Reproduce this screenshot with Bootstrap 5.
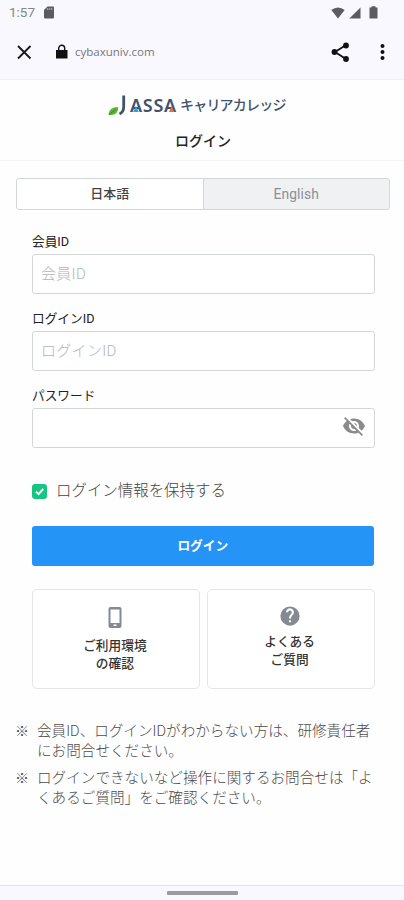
<!DOCTYPE html>
<html lang="ja">
<head>
<meta charset="utf-8">
<meta name="viewport" content="width=device-width, initial-scale=1">
<title>ログイン</title>
<link href="https://cdn.jsdelivr.net/npm/bootstrap@5.3.0/dist/css/bootstrap.min.css" rel="stylesheet">
<style>
body{font-family:Roboto,"Noto Sans CJK JP",sans-serif;color:#333;background:#fefefe;height:900px;overflow:hidden}
svg{display:block;flex:none}
.chrome{height:80px;background:#f8f8fe;border-bottom:1px solid #f1f1f4}
.status{height:25px;padding:0 25px 0 9px;font-size:13.5px;line-height:25px;color:#85858a}
.toolbar{height:54px;padding:0 12px 0 14px}
.lock{margin-left:21px}
.more{margin-left:20px}
.url{font-family:"Open Sans",sans-serif;font-size:11.5px;color:#77777c;margin-left:6px}
.site-head{height:81px;padding-top:13px;border-bottom:1px solid #f4f4f5}
.logo-text{height:24px;line-height:21px;padding-left:108px;color:#40536a;font-weight:500;white-space:nowrap}
.logo-latin{font-family:"Noto Sans",sans-serif;font-weight:600;font-size:18px;letter-spacing:.7px;width:50px;margin-left:4px}
.logo-accent{left:0;top:0}
.logo-kana{font-size:14px;letter-spacing:-.8px;margin-left:0}
.page-title{font-size:14px;line-height:20px;margin:14px 0 0 2px;font-weight:500;color:#222}
.lang{margin:16px 14px 0 16px;height:32px}
.lang .btn{font-size:13px;line-height:18px;padding:5px 0;border:1px solid #d3d6d8;border-radius:3px;font-weight:500;background:#fff;color:#444}
.lang .btn.other{background:#eff1f3;color:#8b9096;font-size:13.8px;font-weight:400;letter-spacing:.1px}
.login{padding:22px 29.5px 0 32px}
.field{height:77px}
.field .form-label{display:block;font-size:12.7px;line-height:20px;margin:0 0 2px;font-weight:400;color:#222}
.field .form-control{height:40px;font-size:15px;padding:0 8px;border:1px solid #d3d6d8;border-radius:3px;background:#fff;letter-spacing:.3px}
.field .form-control::placeholder{color:#b0b4bc;font-weight:300;opacity:1}
.eye{top:6px;right:9px}
.keep{height:20px;margin-top:18px;font-size:15.45px;line-height:20px;font-weight:300;color:#444;gap:9px}
.tick{width:15px;height:15px;border-radius:3px;background:#16c582}
.btn-login{height:40px;margin-top:25px;padding:0;background:#2494f6;border:0;border-radius:3px;color:#fff;font-size:12.7px;font-weight:700;width:341.5px}
.btn-login:hover{background:#2494f6;color:#fff}
.tiles{margin-top:23px;gap:7px}
.tiles .card{height:100px;flex:1 1 0;border:1px solid #e5e6e7;border-radius:5px;font-size:12.7px;line-height:18px;font-weight:500;color:#333;background:#fff;padding-right:2px}
.phone{margin:16px 0 8px}
.help{margin:15px 0 6px}
.notes{margin:32px 20px 0 15px;font-size:14.6px;line-height:20px;font-weight:300;color:#4c4c4c}
.notes li{display:flex;margin-bottom:7px}
.notes li span:first-child{width:22px;flex:none;font-size:14px}
.gesture{height:15px;background:#f8f8fe;border-top:1px solid #e3e3ec}
.handle{width:71px;height:4px;background:#9c9ca0;border-radius:1px}
</style>
</head>
<body class="d-flex flex-column">
<header class="chrome flex-shrink-0">
  <div class="status d-flex align-items-center">
    <span>1:57</span>
    <svg class="ms-2" width="12" height="13" viewBox="0 0 12 13"><path fill="#5b5b60" d="M4.500.5H10q1 0 1 1v10q0 1-1 1H2q-1 0-1-1V4z"/><path d="M4.700 2v2M6.700 2v2M8.700 2v2" stroke="#bbb" stroke-width=".9"/></svg>
    <svg class="ms-auto" width="14" height="12" viewBox="0 0 14 12"><path fill="#5b5b60" d="M.3 3Q7-2 13.700 3L7 11.500z"/></svg>
    <svg class="ms-1" width="12" height="12" viewBox="0 0 12 12"><path fill="#5b5b60" d="M11.500.5v11H.3z"/></svg>
    <svg class="ms-1" width="14" height="13" viewBox="0 0 14 13"><path fill="#5b5b60" d="M5 1.500V.3h4v1.200h2v11H3v-11z" transform="translate(1.500)"/></svg>
  </div>
  <div class="toolbar d-flex align-items-center">
    <svg width="20" height="20" viewBox="0 0 20 20"><path d="M4 4l12.500 12.500M16.500 4L4 16.500" stroke="#1b1b1e" stroke-width="1.900"/></svg>
    <svg class="lock" width="14" height="16" viewBox="0 0 14 16"><path fill="#111" d="M1 6h11.500v8.500H1z"/><path d="M3.700 6V4.300a3 3 0 0 1 6 0V6" fill="none" stroke="#111" stroke-width="1.400"/></svg>
    <span class="url">cybaxuniv.com</span>
    <svg class="ms-auto" width="22" height="22" viewBox="0 0 22 22"><path d="M16 4L5 11l11 7" fill="none" stroke="#111" stroke-width="1.800"/><g fill="#111"><circle cx="16" cy="4.500" r="2.900"/><circle cx="4.500" cy="11" r="2.900"/><circle cx="16" cy="18" r="2.900"/></g></svg>
    <svg class="more" width="20" height="20" viewBox="0 0 20 20"><g fill="#111"><circle cx="10.500" cy="4" r="2"/><circle cx="10.500" cy="10" r="2"/><circle cx="10.500" cy="16" r="2"/></g></svg>
  </div>
</header>
<main class="flex-grow-1">
  <div class="site-head">
    <div class="logo-text d-flex align-items-center">
      <svg class="align-self-end" width="11" height="10" viewBox="0 0 11 10"><path fill="#5bb531" d="M.3 7.800Q1 .3 10.300.1 10.300 9.500.3 7.800z"/><path d="M1 7.600L8 2.300" stroke="#2d8f2d" stroke-width="1"/></svg>
      <svg width="7" height="22" viewBox="0 0 7 22"><path d="M4.700 1.500V13Q4.700 18 .5 20" fill="none" stroke="#40536a" stroke-width="2.800"/></svg>
      <span class="logo-latin position-relative">ASSA<svg class="logo-accent position-absolute" width="52" height="22" viewBox="0 0 52 22"><path fill="#28a4df" d="M6 11l2.800 6H3.200z"/><path fill="#ee6b35" d="M41.700 11l2.800 6h-5.600z"/></svg></span>
      <span class="logo-kana">キャリアカレッジ</span>
    </div>
    <h1 class="page-title text-center">ログイン</h1>
  </div>
  <div class="lang btn-group d-flex" role="group" style="margin-top:17px">
    <button type="button" class="btn w-50">日本語</button>
    <button type="button" class="btn other w-50">English</button>
  </div>
  <form class="login">
    <div class="field"><label class="form-label" for="member">会員ID</label><input id="member" class="form-control" placeholder="会員ID"></div>
    <div class="field"><label class="form-label" for="loginid">ログインID</label><input id="loginid" class="form-control" placeholder="ログインID"></div>
    <div class="field"><label class="form-label" for="pass">パスワード</label>
      <div class="position-relative"><input id="pass" type="password" class="form-control">
        <svg class="eye position-absolute" width="24" height="24" viewBox="0 0 24 24"><path fill="#8b8b8b" d="M12 7c2.760 0 5 2.240 5 5 0 .65-.13 1.260-.36 1.830l2.920 2.920c1.510-1.260 2.700-2.890 3.430-4.750-1.730-4.390-6-7.500-11-7.500-1.400 0-2.740.25-3.980.7l2.160 2.160C10.740 7.130 11.350 7 12 7zM2 4.270l2.280 2.280.46.46C3.080 8.300 1.780 10.020 1 12c1.730 4.390 6 7.500 11 7.500 1.550 0 3.030-.3 4.380-.84l.42.42L19.730 22 21 20.730 3.270 3 2 4.270zM7.530 9.800l1.550 1.550c-.05.210-.08.430-.08.650 0 1.660 1.340 3 3 3 .22 0 .44-.03.65-.08l1.550 1.550c-.67.33-1.410.53-2.200.53-2.760 0-5-2.240-5-5 0-.79.2-1.530.53-2.200zm4.310-.78l3.150 3.150.02-.16c0-1.660-1.340-3-3-3l-.17.010z"/></svg>
      </div></div>
    <div class="keep d-flex align-items-center"><span class="tick"><svg width="15" height="15" viewBox="0 0 15 15"><path d="M4 7.600l2.600 2.500L11.200 5" fill="none" stroke="#fff" stroke-width="2"/></svg></span><span>ログイン情報を保持する</span></div>
    <button type="button" class="btn btn-login">ログイン</button>
    <div class="tiles d-flex">
      <div class="card align-items-center text-center">
        <svg class="phone" width="16" height="23" viewBox="0 0 16 23"><rect x="1.500" y="1" width="13" height="21" rx="2" fill="#848992"/><path fill="#fff" d="M3.500 3.500h9V17h-9z"/><path fill="#fff" d="M6.500 18.500h3v1.500h-3z"/></svg>
        <div>ご利用環境<br>の確認</div>
      </div>
      <div class="card align-items-center text-center">
        <svg class="help" width="22" height="22" viewBox="0 0 24 24"><path fill="#848992" d="M12 1.500a10.500 10.500 0 1 0 0 21 10.500 10.500 0 0 0 0-21zm1.200 17.300h-2.300v-2.300h2.300zm2.300-8.400l-1 1c-.8.8-1.300 1.600-1.300 3.200h-2.300V14c0-1.200.5-2.300 1.300-3.200l1.300-1.400A2 2 0 1 0 10 8H7.700a4.300 4.300 0 1 1 7.800 2.400z"/></svg>
        <div>よくある<br>ご質問</div>
      </div>
    </div>
  </form>
  <ul class="notes list-unstyled">
    <li><span>※</span><span>会員ID、ログインIDがわからない方は、研修責任者<br>にお問合せください。</span></li>
    <li><span>※</span><span>ログインできないなど操作に関するお問合せは「よ<br>くあるご質問」をご確認ください。</span></li>
  </ul>
</main>
<footer class="gesture flex-shrink-0 d-flex justify-content-center align-items-center"><div class="handle"></div></footer>
<script src="https://cdn.jsdelivr.net/npm/bootstrap@5.3.0/dist/js/bootstrap.bundle.min.js"></script>
</body>
</html>
